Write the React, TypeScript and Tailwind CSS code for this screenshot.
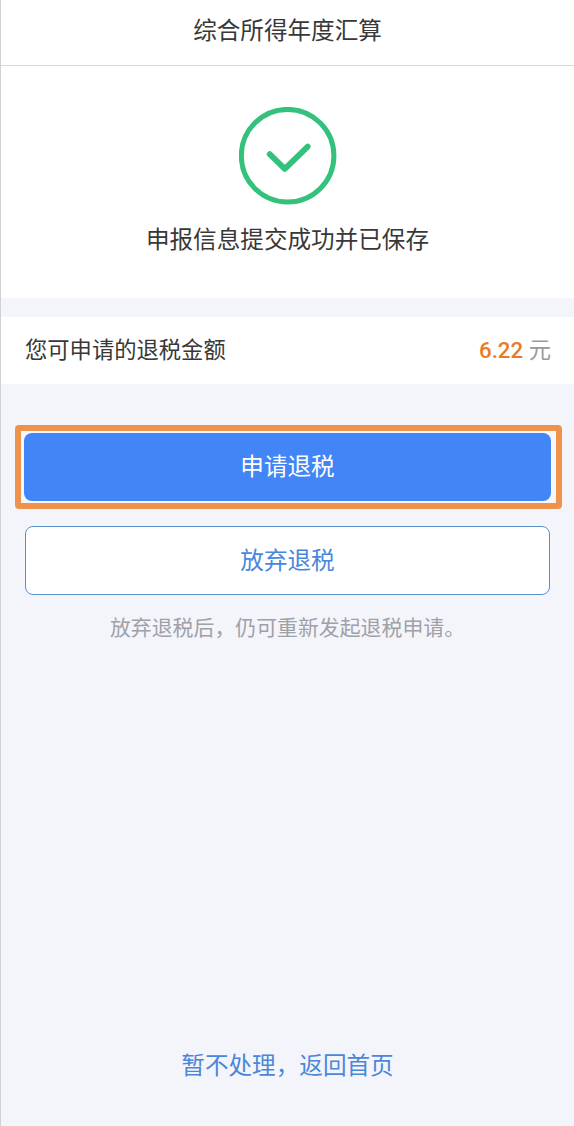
import React from 'react';

const SuccessIcon: React.FC = () => (
  <svg className="h-[98px] w-[98px]" viewBox="0 0 98 98" fill="none" stroke="#34c17b">
    <circle cx="48.6" cy="48.7" r="46.3" strokeWidth="5" />
    <path d="M30.7 47.2L45.8 61.8L68.7 39.6" strokeWidth="5.8" strokeLinecap="round" strokeLinejoin="round" />
  </svg>
);

const App: React.FC = () => {
  const refundAmount = 6.22;

  return (
    <div className="flex h-[1126px] w-[574px] flex-col border-l border-[#d0d1d6] bg-[#f4f5fa] font-['Roboto','Noto_Sans_CJK_SC',sans-serif] text-[#383838]">
      {/* Header */}
      <header className="flex h-[66px] shrink-0 justify-center border-b border-[#d9d9d9] bg-white pt-[13px]">
        <h1 className="text-[23.6px] leading-9">综合所得年度汇算</h1>
      </header>

      {/* Submit result */}
      <section className="flex h-[232px] shrink-0 flex-col items-center bg-white pt-[41px]">
        <SuccessIcon />
        <p className="mt-[17px] text-[23.6px] leading-9">申报信息提交成功并已保存</p>
      </section>

      {/* Refund amount */}
      <section className="mt-[19px] flex h-[67px] shrink-0 items-center justify-between bg-white pr-[23px] pl-6">
        <span className="text-[22.3px]">您可申请的退税金额</span>
        <span className="text-[22.3px] text-[#999999]">
          <span className="font-medium text-[#ea7a28]">{refundAmount.toFixed(2)}</span> 元
        </span>
      </section>

      {/* Actions */}
      <main className="flex flex-1 flex-col">
        <div className="mt-[41px] mr-3 ml-3.5 h-[84px] rounded-[4px] border-6 border-[#ee924c] bg-[#f8f8fa] py-0.5 pr-[5px] pl-[3px]">
          <button className="h-full w-full rounded-lg bg-[#4285f7] pt-0.5 text-[23.6px] text-white">申请退税</button>
        </div>
        <button className="mt-[17px] mr-6 ml-6 h-[69px] rounded-lg border border-[#5b8fcb] bg-white pt-0.5 text-[23.6px] text-[#4a87dc]">
          放弃退税
        </button>
        <p className="mt-[17px] text-center text-[20.9px] leading-8 text-[#a0a1a8]">
          放弃退税后，仍可重新发起退税申请。
        </p>
      </main>

      <footer className="flex h-[78px] shrink-0 justify-center">
        <a href="#" className="text-[23.6px] leading-9 text-[#4a87dc]">暂不处理，返回首页</a>
      </footer>
    </div>
  );
};

export default App;
